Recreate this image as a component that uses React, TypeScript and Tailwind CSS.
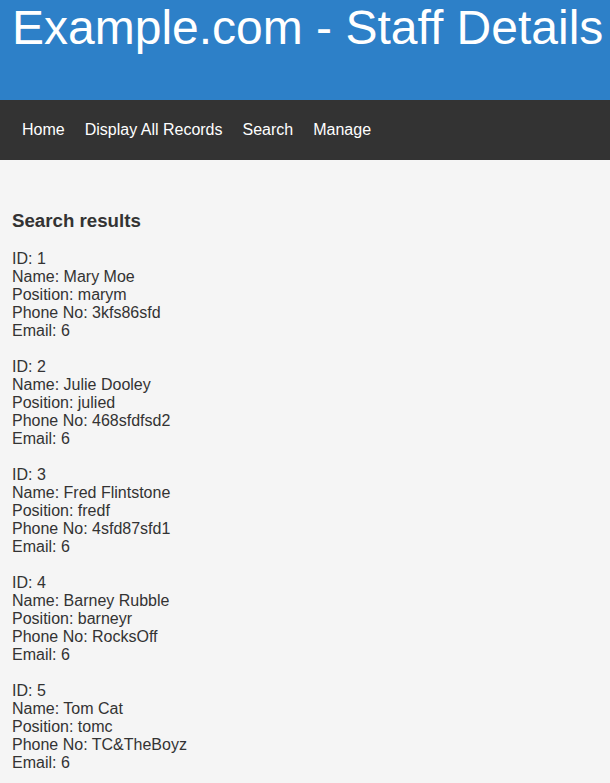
import React from 'react';

type Staff = {
  id: number;
  name: string;
  position: string;
  phone: string;
  email: string;
};

const results: Staff[] = [
  { id: 1, name: 'Mary Moe', position: 'marym', phone: '3kfs86sfd', email: '6' },
  { id: 2, name: 'Julie Dooley', position: 'julied', phone: '468sfdfsd2', email: '6' },
  { id: 3, name: 'Fred Flintstone', position: 'fredf', phone: '4sfd87sfd1', email: '6' },
  { id: 4, name: 'Barney Rubble', position: 'barneyr', phone: 'RocksOff', email: '6' },
  { id: 5, name: 'Tom Cat', position: 'tomc', phone: 'TC&TheBoyz', email: '6' },
];

const navLinks = ['Home', 'Display All Records', 'Search', 'Manage'];

const App: React.FC = () => {
  return (
    <div className="min-h-[783px] bg-[#f5f5f5] font-['Liberation_Sans',Arial,sans-serif] text-[#333]">
      {/* Header */}
      <header className="h-[100px] bg-[#2d80c8] px-3">
        <h1 className="m-0 text-[48px] leading-[55px] font-normal text-white whitespace-nowrap">
          Example.com - Staff Details
        </h1>
      </header>

      {/* Nav */}
      <nav className="h-[60px] bg-[#333] flex items-center px-3">
        {navLinks.map((link) => (
          <a key={link} href="#" className="px-[10px] text-base text-white">
            {link}
          </a>
        ))}
      </nav>

      {/* Results */}
      <main className="px-3 pt-[50px] pb-4">
        <h3 className="text-[18.7px] font-bold leading-[22px] mb-[18px]">Search results</h3>
        <div className="text-base leading-[18px]">
          {results.map((r) => (
            <div key={r.id} className="mb-[18px]">
              <div>ID: {r.id}</div>
              <div>Name: {r.name}</div>
              <div>Position: {r.position}</div>
              <div>Phone No: {r.phone}</div>
              <div>Email: {r.email}</div>
            </div>
          ))}
        </div>
      </main>
    </div>
  );
};

export default App;
